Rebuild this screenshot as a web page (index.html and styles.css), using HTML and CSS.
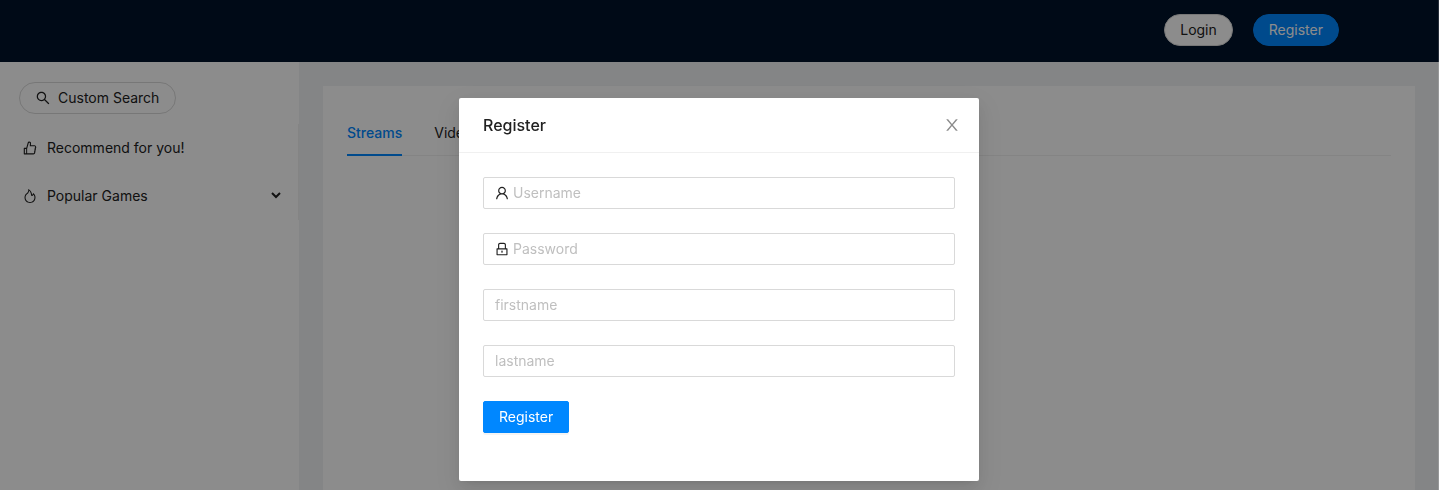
FILE: index.html
```html
<!DOCTYPE html>
<html lang="en">
<head>
<meta charset="utf-8">
<title>Register</title>
<link rel="stylesheet" href="styles.css">
</head>
<body>
<div class="app">
  <header class="topbar">
    <button type="button" class="btn btn-round">Login</button>
    <button type="button" class="btn btn-round btn-primary">Register</button>
  </header>
  <div class="columns">
    <aside class="sidebar">
      <button type="button" class="btn btn-round search">
        <svg class="icon" viewBox="64 64 896 896" aria-hidden="true"><path d="M909.6 854.5L649.9 594.8C690.2 542.7 712 479 712 412c0-80.2-31.3-155.4-87.9-212.1-56.6-56.7-132-87.9-212.1-87.9s-155.5 31.3-212.1 87.9C143.2 256.5 112 331.8 112 412c0 80.1 31.3 155.5 87.9 212.1C256.5 680.8 331.8 712 412 712c67 0 130.6-21.8 182.7-62l259.7 259.6a8.2 8.2 0 0011.6 0l43.6-43.5a8.2 8.2 0 000-11.6zM570.4 570.4C528 612.7 471.8 636 412 636s-116-23.3-158.4-65.6C211.3 528 188 471.8 188 412s23.3-116.1 65.6-158.4C296 211.3 352.2 188 412 188s116.1 23.2 158.4 65.6S636 352.2 636 412s-23.3 116.1-65.6 158.4z"/></svg>
        <span>Custom Search</span>
      </button>
      <nav class="menu">
        <button type="button" class="menu-item">
          <svg class="icon" viewBox="64 64 896 896" aria-hidden="true"><path d="M885.9 533.7c16.8-22.2 26.1-49.4 26.1-77.7 0-44.9-25.1-87.4-65.5-111.1a67.67 67.67 0 00-34.3-9.3H572.4l6-122.9c1.4-29.7-9.1-57.9-29.5-79.4A106.62 106.62 0 00471 99.9c-52 0-98 35-111.8 85.1l-85.9 311H144c-17.7 0-32 14.3-32 32v364c0 17.7 14.3 32 32 32h601.3c9.2 0 18.2-1.8 26.5-5.4 47.6-20.3 78.3-66.8 78.3-118.4 0-12.6-1.8-25-5.4-37 16.8-22.2 26.1-49.4 26.1-77.7 0-12.6-1.8-25-5.4-37 16.8-22.2 26.1-49.4 26.1-77.7-.2-12.6-2-25.1-5.6-37.1zM184 852V568h81v284h-81zm636.4-353l-21.9 19 13.9 25.4a56.2 56.2 0 016.9 27.3c0 16.5-7.2 32.2-19.6 43l-21.9 19 13.9 25.4a56.2 56.2 0 016.9 27.3c0 16.5-7.2 32.2-19.6 43l-21.9 19 13.9 25.4a56.2 56.2 0 016.9 27.3c0 22.4-13.2 42.6-33.6 51.8H329V564.8l99.5-360.5a44.1 44.1 0 0142.2-32.3c7.6 0 15.1 2.2 21.1 6.7 9.9 7.4 15.2 18.6 14.6 30.5l-9.6 198.4h314.4C829 418.5 840 436.9 840 456c0 16.5-7.2 32.1-19.6 43z"/></svg>
          <span class="menu-label">Recommend for you!</span>
        </button>
        <button type="button" class="menu-item" aria-expanded="false">
          <svg class="icon" viewBox="64 64 896 896" aria-hidden="true"><path d="M834.1 469.2A347.49 347.49 0 00751.2 354l-29.1-26.7a8.09 8.09 0 00-13 3.3l-13 37.3c-8.1 23.4-23 47.3-44.1 70.8-1.4 1.5-3 1.9-4.1 2-1.1.1-2.8-.1-4.3-1.5-1.4-1.2-2.1-3-2-4.8 3.7-60.2-14.3-128.1-53.7-202C555.3 171 510 123.1 453.4 89.7l-41.3-24.3c-5.4-3.2-12.3 1-12 7.3l2.2 48c1.5 32.8-2.3 61.8-11.3 85.9-11 29.5-26.8 56.9-47 81.5a295.64 295.64 0 01-47.5 46.1 352.6 352.6 0 00-100.3 121.5A347.75 347.75 0 00160 610c0 47.2 9.3 92.9 27.7 136a349.4 349.4 0 0075.5 110.9c32.4 32 70 57.2 111.9 74.7C418.5 949.8 464.5 959 512 959s93.5-9.2 136.9-27.3A348.6 348.6 0 00760.8 857c32.4-32 57.8-69.4 75.5-110.9a344.2 344.2 0 0027.7-136c0-48.8-10-96.2-29.9-140.9zM713 808.5c-53.7 53.2-125 82.4-201 82.4s-147.3-29.2-201-82.4c-53.5-53.1-83-123.5-83-198.4 0-43.5 9.8-85.2 29.1-124 18.8-37.9 46.8-71.8 80.8-97.9a349.6 349.6 0 0058.6-56.8c25-30.5 44.6-64.5 58.2-101a240 240 0 0012.1-46.5c24.1 22.2 44.3 49 61.2 80.4 33.4 62.6 48.8 118.3 45.8 165.7a74.01 74.01 0 0024.4 59.8 73.36 73.36 0 0053.4 18.8c19.7-1 37.8-9.7 51-24.4 13.3-14.9 24.8-30.1 34.4-45.6 14 17.9 25.7 37.4 35 58.4 15.9 35.8 24 73.9 24 113.1 0 74.9-29.5 145.4-83 198.4z"/></svg>
          <span class="menu-label">Popular Games</span>
          <svg class="chevron" viewBox="0 0 10 10" aria-hidden="true"><path d="M1 2l4 4 4-4"/></svg>
        </button>
      </nav>
    </aside>
    <main class="content">
      <section class="panel">
        <div class="tabs" role="tablist">
          <button type="button" role="tab" class="tab tab-active" aria-selected="true">Streams</button>
          <button type="button" role="tab" class="tab" aria-selected="false">Videos</button>
        </div>
      </section>
    </main>
  </div>
</div>

<div class="mask">
  <div class="modal" role="dialog" aria-modal="true" aria-labelledby="modal-title">
    <div class="modal-header">
      <h1 class="modal-title" id="modal-title">Register</h1>
      <button type="button" class="close" aria-label="Close">
        <svg class="close-icon" viewBox="64 64 896 896" aria-hidden="true"><path d="M563.8 512l262.5-312.9c4.4-5.2.7-13.1-6.1-13.1h-79.8c-4.7 0-9.2 2.1-12.3 5.7L511.6 449.8 295.1 191.7c-3-3.6-7.5-5.7-12.3-5.7H203c-6.8 0-10.5 7.9-6.1 13.1L459.4 512 196.9 824.9A7.95 7.95 0 00203 838h79.8c4.7 0 9.2-2.1 12.3-5.7l216.5-258.1 216.5 258.1c3 3.6 7.5 5.7 12.3 5.7h79.8c6.8 0 10.5-7.9 6.1-13.1L563.8 512z"/></svg>
      </button>
    </div>
    <form class="form">
      <label class="field">
        <svg class="icon" viewBox="64 64 896 896" aria-hidden="true"><path d="M858.5 763.6a374 374 0 00-80.6-119.5 375.63 375.63 0 00-119.5-80.6c-.4-.2-.8-.3-1.2-.5C719.5 518 760 444.7 760 362c0-137-111-248-248-248S264 225 264 362c0 82.7 40.5 156 102.8 201.1-.4.2-.8.3-1.2.5-44.8 18.9-85 46-119.5 80.6a375.63 375.63 0 00-80.6 119.5A371.7 371.7 0 00136 901.8a8 8 0 008 8.2h60c4.4 0 7.9-3.5 8-7.8 2-77.2 33-149.5 87.8-204.3 56.7-56.7 132-87.9 212.2-87.9s155.5 31.2 212.2 87.9C779 752.7 810 825 812 902.2c.1 4.4 3.6 7.8 8 7.8h60a8 8 0 008-8.2c-1-47.8-10.9-94.3-29.5-138.2zM512 534c-45.9 0-89.1-17.9-121.6-50.4S340 407.9 340 362c0-45.9 17.9-89.1 50.4-121.6S466.1 190 512 190s89.1 17.9 121.6 50.4S684 316.1 684 362c0 45.9-17.9 89.1-50.4 121.6S557.9 534 512 534z"/></svg>
        <input type="text" name="username" placeholder="Username" aria-label="Username">
      </label>
      <label class="field">
        <svg class="icon" viewBox="64 64 896 896" aria-hidden="true"><path d="M832 464h-68V240c0-70.7-57.3-128-128-128H388c-70.7 0-128 57.3-128 128v224h-68c-17.7 0-32 14.3-32 32v384c0 17.7 14.3 32 32 32h640c17.7 0 32-14.3 32-32V496c0-17.7-14.3-32-32-32zM332 240c0-30.9 25.1-56 56-56h248c30.9 0 56 25.1 56 56v224H332V240zm460 600H232V536h560v304zM484 701v53c0 4.4 3.6 8 8 8h40c4.4 0 8-3.6 8-8v-53a48.01 48.01 0 10-56 0z"/></svg>
        <input type="password" name="password" placeholder="Password" aria-label="Password">
      </label>
      <label class="field">
        <input type="text" name="firstname" placeholder="firstname" aria-label="firstname">
      </label>
      <label class="field">
        <input type="text" name="lastname" placeholder="lastname" aria-label="lastname">
      </label>
      <button type="submit" class="btn btn-primary submit">Register</button>
    </form>
  </div>
</div>
</body>
</html>
```

FILE: styles.css
```css
* {
  box-sizing: border-box;
}

body {
  margin: 0;
  color: #212121;
  font: 14px/22px Inter, Roboto, "Liberation Sans", sans-serif;
}

button,
input {
  margin: 0;
  color: inherit;
  font: inherit;
}

button {
  cursor: pointer;
}

.app {
  display: flex;
  flex-direction: column;
  height: 100vh;
  overflow: hidden;
  background: #f0f2f5;
}

.icon {
  flex: none;
  width: 14px;
  height: 14px;
  fill: currentColor;
}

.btn {
  height: 32px;
  padding: 0 15px;
  border: 1px solid #d9d9d9;
  border-radius: 2px;
  background: #fff;
}

.btn-round {
  border-radius: 32px;
}

.btn-primary {
  border-color: #0087ff;
  background: #0087ff;
  color: #fff;
}

.topbar {
  display: flex;
  flex: none;
  justify-content: flex-end;
  gap: 20px;
  padding: 14px 100px 16px;
  background: #00132a;
}

.columns {
  display: flex;
  flex: 1;
}

.sidebar {
  flex: none;
  width: 299px;
  padding-top: 20px;
  background: #fff;
}

.search {
  display: flex;
  align-items: center;
  gap: 8px;
  margin-left: 19px;
  padding: 0 16px;
}

.menu {
  display: flex;
  flex-direction: column;
  gap: 8px;
  margin-top: 10px;
  padding: 4px 0;
  border-right: 1px solid #f0f0f0;
}

.menu-item {
  display: flex;
  align-items: center;
  gap: 10px;
  height: 40px;
  padding: 0 17px 0 23px;
  border: 0;
  background: none;
  text-align: left;
}

.menu-label {
  flex: 1;
}

.chevron {
  width: 10px;
  height: 10px;
  fill: none;
  stroke: currentColor;
  stroke-width: 2;
}

.content {
  display: flex;
  flex: 1;
  padding: 24px 24px 0;
}

.panel {
  flex: 1;
  padding: 24px;
  background: #fff;
}

.tabs {
  display: flex;
  gap: 32px;
  box-shadow: inset 0 -1px #f0f0f0;
}

.tab {
  padding: 12px 0 10px;
  border: 0;
  border-bottom: 2px solid transparent;
  background: none;
}

.tab-active {
  border-color: #0087ff;
  color: #0087ff;
  font-weight: 500;
}

.mask {
  position: fixed;
  inset: 0;
  padding-top: 98px;
  border-right: 1px solid rgba(255, 255, 255, 0.15);
  background: rgba(0, 0, 0, 0.45);
}

.modal {
  width: 520px;
  max-width: 100%;
  margin: 0 auto;
  border-radius: 2px;
  background: #fff;
  box-shadow: 0 3px 6px -4px rgba(0, 0, 0, 0.12), 0 6px 16px rgba(0, 0, 0, 0.08), 0 9px 28px 8px rgba(0, 0, 0, 0.05);
}

.modal-header {
  display: flex;
  align-items: center;
  justify-content: space-between;
  padding: 16px 19px 16px 24px;
  border-bottom: 1px solid #f0f0f0;
}

.modal-title {
  margin: 0;
  font-size: 16px;
  font-weight: 500;
  line-height: 22px;
}

.close {
  display: flex;
  padding: 0;
  border: 0;
  background: none;
  color: #8c8c8c;
}

.close-icon {
  width: 16px;
  height: 16px;
  fill: currentColor;
}

.form {
  display: flex;
  flex-direction: column;
  gap: 24px;
  padding: 24px 24px 48px;
}

.field {
  display: flex;
  align-items: center;
  gap: 4px;
  height: 32px;
  padding: 0 11px;
  border: 1px solid #d9d9d9;
  border-radius: 2px;
}

.field input {
  flex: 1;
  min-width: 0;
  padding: 0;
  border: 0;
  outline: 0;
  background: none;
}

.field input::placeholder {
  color: #bfbfbf;
  opacity: 1;
}

.submit {
  align-self: flex-start;
  box-shadow: 0 2px 0 rgba(0, 0, 0, 0.045);
}
```
